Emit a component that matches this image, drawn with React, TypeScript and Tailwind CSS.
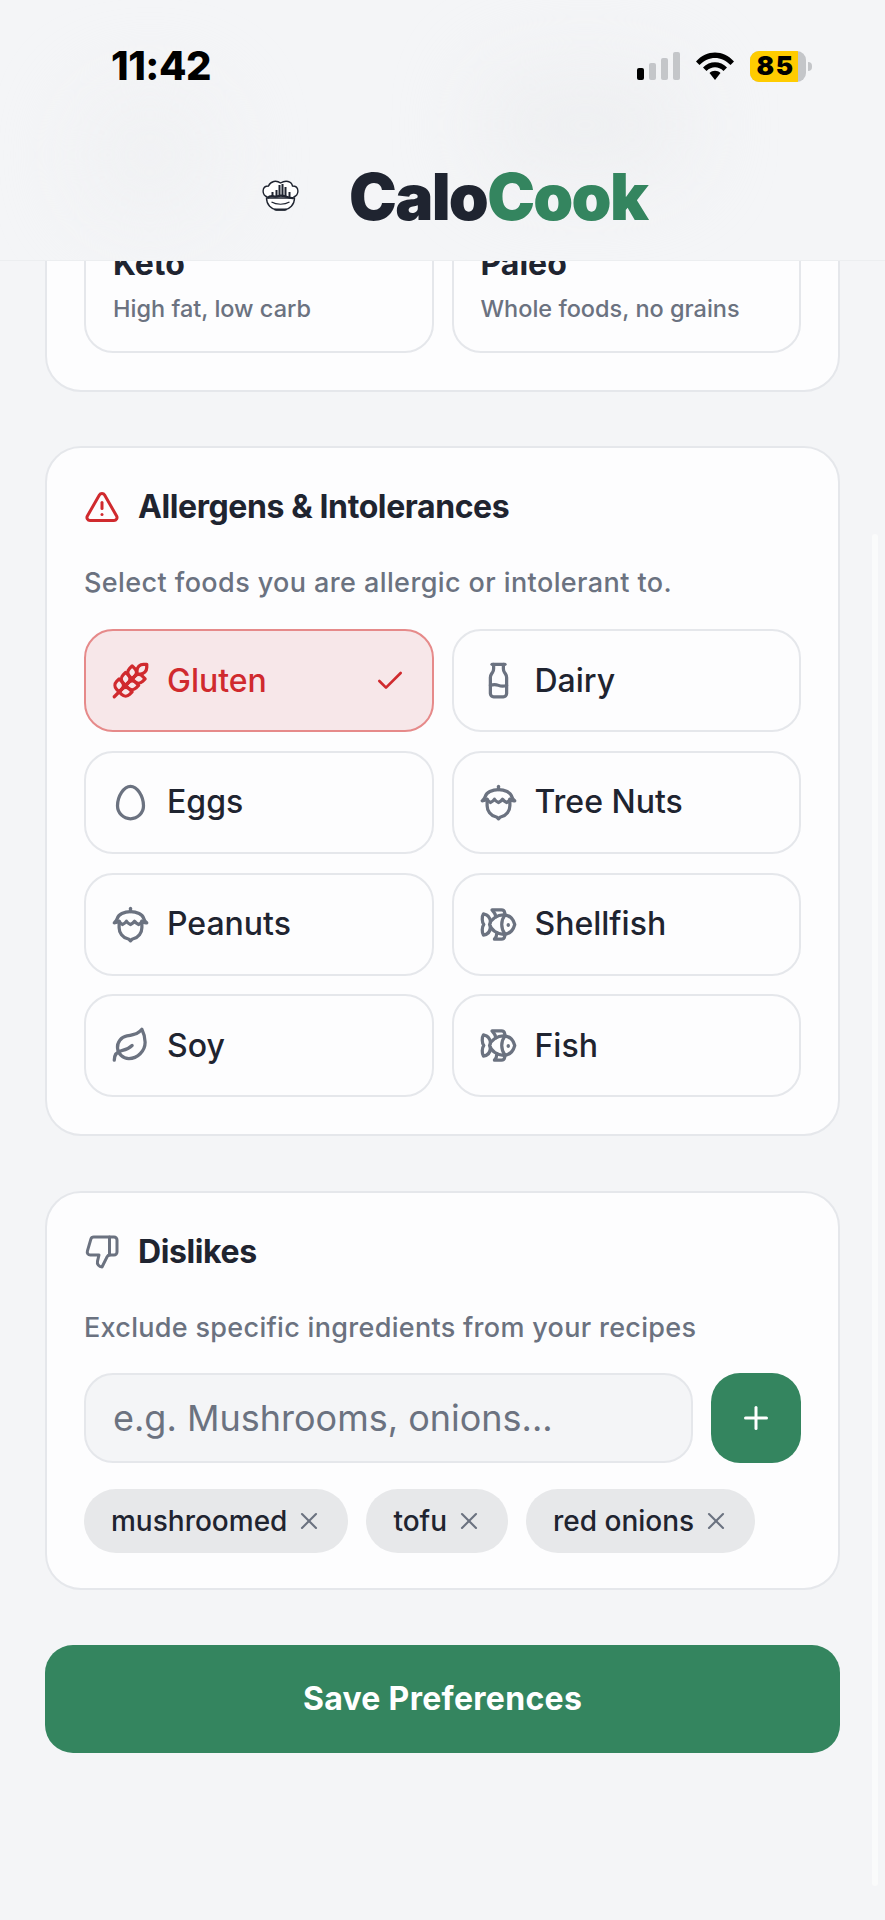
import React from "react";
import {
  Check,
  Egg,
  Fish,
  Leaf,
  Milk,
  Nut,
  Plus,
  ThumbsDown,
  TriangleAlert,
  Wheat,
  X,
} from "lucide-react";

interface Allergen {
  label: string;
  icon: React.ElementType;
  selected?: boolean;
}

const allergens: Allergen[] = [
  { label: "Gluten", icon: Wheat, selected: true },
  { label: "Dairy", icon: Milk },
  { label: "Eggs", icon: Egg },
  { label: "Tree Nuts", icon: Nut },
  { label: "Peanuts", icon: Nut },
  { label: "Shellfish", icon: Fish },
  { label: "Soy", icon: Leaf },
  { label: "Fish", icon: Fish },
];

const diets = [
  { title: "Keto", text: "High fat, low carb" },
  { title: "Paleo", text: "Whole foods, no grains" },
];

const dislikes = ["mushroomed", "tofu", "red onions"];

const ChefLogo = () => (
  <svg viewBox="0 0 38 31" className="-mt-[3px] h-[31px] w-[39px]" fill="none" stroke="#1f2430" strokeWidth="1.4">
    <path d="M6 17 C0 15 0 6 7 6 C9 1 15 0 19 3 C24 0 30 1 31 6 C38 6 38 15 32 17" fill="#fff" />
    <path d="M5 18 H33 C33 25 28 29 23 30 H15 C10 29 5 25 5 18 Z" fill="#fff" />
    <path d="M11 17 V12 M15 17 V10 M18 17 V5 M21 17 V4 M24 17 V7 M28 17 V12" strokeWidth="2" />
    <path d="M6 18 C10 14 13 18 17 16 C22 14 27 19 32 18" strokeWidth="2.2" />
    <path d="M10 22 C15 25 23 25 28 22" strokeWidth="1.2" />
    <path d="M13 29.5 H25" strokeWidth="2" />
  </svg>
);

const Signal = () => (
  <div className="flex h-[28px] items-end gap-[5px]">
    <div className="h-[12px] w-[7px] rounded-[2px] bg-black" />
    <div className="h-[17px] w-[7px] rounded-[2px] bg-[#c4c6c9]" />
    <div className="h-[22px] w-[7px] rounded-[2px] bg-[#c4c6c9]" />
    <div className="h-[28px] w-[7px] rounded-[2px] bg-[#c4c6c9]" />
  </div>
);

const Wifi = () => (
  <svg viewBox="0 0 38 28" className="h-[28px] w-[38px]" fill="black">
    <path d="M0 9.5 C10.5 -2.5 27.5 -2.5 38 9.5 L34.5 13 C25.5 3.5 12.5 3.5 3.5 13 Z" />
    <path d="M7 15.5 C13.5 8.5 24.5 8.5 31 15.5 L27.5 19 C22.5 14 15.5 14 10.5 19 Z" />
    <path d="M13.5 21 C16.5 18 21.5 18 24.5 21 L19 28 Z" />
  </svg>
);

const Battery = () => (
  <div className="flex items-center gap-[2px]">
    <div className="flex h-[31px] w-[56px] overflow-hidden rounded-[9px] bg-[#c4c6c9]">
      <div className="flex w-[48px] items-center justify-center bg-[#ffcc00] pl-[3px] text-[26px] font-black leading-none tracking-[1.5px] text-black">
        85
      </div>
    </div>
    <div className="h-[9px] w-[4px] rounded-r-full bg-[#c4c6c9]" />
  </div>
);

const SectionTitle = ({ icon, title }: { icon: React.ReactNode; title: string }) => (
  <div className="flex h-[40px] items-center gap-[18px]">
    {icon}
    <h2 className="text-[32px] font-bold tracking-[-0.4px] text-[#1f2430]">{title}</h2>
  </div>
);

const AllergenButton = ({ item }: { item: Allergen }) => {
  const Icon = item.icon;
  if (item.selected) {
    return (
      <button className="flex h-[103px] items-center gap-[17px] rounded-[29px] border-2 border-[#e68a8a] bg-[#f7e7e9] pl-[25px] pr-[26px] text-left">
        <Icon size={39} strokeWidth={2} className="text-[#d02a2e]" />
        <span className="flex-1 text-[32px] font-medium text-[#d02a2e]">{item.label}</span>
        <Check size={32} strokeWidth={2} className="text-[#d02a2e]" />
      </button>
    );
  }
  return (
    <button className="flex h-[103px] items-center gap-[17px] rounded-[29px] border-2 border-[#e5e7eb] pl-[25px] pr-[26px] text-left">
      <Icon size={39} strokeWidth={2} className="text-[#6b7280]" />
      <span className="flex-1 text-[32px] font-medium text-[#1f2430]">{item.label}</span>
    </button>
  );
};

export default function App() {
  return (
    <div className="relative flex h-[1920px] w-[885px] flex-col overflow-hidden bg-[#f4f5f7] font-['Inter',sans-serif]">
      <header className="relative z-10 h-[261px] shrink-0 overflow-hidden border-b border-[#eceef0] bg-[#f4f5f7]">
        <div className="absolute left-[80px] top-[90px] h-[130px] w-[140px] rounded-full bg-[#f0f1f3] blur-2xl" />
        <div className="absolute left-[480px] top-[70px] h-[110px] w-[210px] rounded-full bg-[#eeeff1] blur-2xl" />
        <div className="relative flex items-center justify-between pl-[111px] pr-[73px] pt-[49px]">
          <span className="text-[40px] font-extrabold leading-[34px] tracking-[-0.5px] text-black">11:42</span>
          <div className="flex items-center gap-[16px]">
            <Signal />
            <Wifi />
            <Battery />
          </div>
        </div>
        <div className="relative mt-[83px] flex items-center gap-[49px] pl-[261px]">
          <ChefLogo />
          <h1 className="text-[64px] font-black leading-[62px] tracking-[-1.7px] text-[#1f2430]">
            Calo<span className="text-[#34855f]">Cook</span>
          </h1>
        </div>
      </header>

      <main className="flex flex-col px-[45px]">
        <section className="mb-[54px] mt-[-91px] rounded-[36px] border-2 border-[#e5e7eb] bg-[#fdfdfe] px-[37px] pb-[37px] pt-[40px]">
          <div className="grid grid-cols-2 gap-[18px]">
            {diets.map((diet) => (
              <div key={diet.title} className="rounded-[29px] border-2 border-[#e5e7eb] px-[27px] pb-[25px] pt-[30px]">
                <div className="text-[32px] font-bold leading-[40px] text-[#1f2430]">{diet.title}</div>
                <div className="mt-[7px] text-[23.5px] font-medium text-[#6b7280]">{diet.text}</div>
              </div>
            ))}
          </div>
        </section>

        <section className="mb-[55px] rounded-[36px] border-2 border-[#e5e7eb] bg-[#fdfdfe] px-[37px] pb-[37px] pt-[39px]">
          <SectionTitle icon={<TriangleAlert size={36} strokeWidth={2} className="text-[#d02a2e]" />} title="Allergens & Intolerances" />
          <p className="mb-[27px] mt-[37px] text-[27px] font-medium leading-[38px] tracking-[0.4px] text-[#6b7280]">
            Select foods you are allergic or intolerant to.
          </p>
          <div className="grid grid-cols-2 gap-x-[18px] gap-y-[18.67px]">
            {allergens.map((item) => (
              <AllergenButton key={item.label} item={item} />
            ))}
          </div>
        </section>

        <section className="mb-[55px] rounded-[36px] border-2 border-[#e5e7eb] bg-[#fdfdfe] px-[37px] pb-[35px] pt-[39px]">
          <SectionTitle icon={<ThumbsDown size={36} strokeWidth={2} className="text-[#6b7280]" />} title="Dislikes" />
          <p className="mb-[26px] mt-[37px] text-[27px] font-medium leading-[38px] tracking-[0.3px] text-[#6b7280]">
            Exclude specific ingredients from your recipes
          </p>
          <div className="flex gap-[18px]">
            <input
              placeholder="e.g. Mushrooms, onions..."
              className="h-[90px] min-w-0 flex-1 rounded-[29px] border-2 border-[#e5e7eb] bg-[#f4f5f7] px-[27px] text-[36px] outline-none placeholder:text-[#6b7280]"
            />
            <button className="flex h-[90px] w-[90px] items-center justify-center rounded-[29px] bg-[#34855f] text-white">
              <Plus size={36} strokeWidth={2} />
            </button>
          </div>
          <div className="mt-[26px] flex gap-[18px]">
            {dislikes.map((name) => (
              <div key={name} className="flex h-[64px] items-center gap-[8px] rounded-full bg-[#e7e8ea] pl-[27px] pr-[25px]">
                <span className="text-[28px] font-medium text-[#1f2430]">{name}</span>
                <X size={28} strokeWidth={1.8} className="text-[#6b7280]" />
              </div>
            ))}
          </div>
        </section>

        <button className="h-[108px] rounded-[28px] bg-[#34855f] text-[32px] font-bold tracking-[0.3px] text-white">
          Save Preferences
        </button>
      </main>

      {/* scroll thumb */}
      <div className="absolute right-[7px] top-[534px] h-[1352px] w-[6px] rounded-full bg-[#fafbfb]" />
    </div>
  );
}
